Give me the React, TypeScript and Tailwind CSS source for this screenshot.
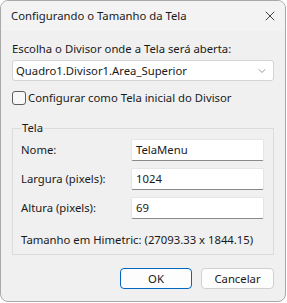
import { X, ChevronDown } from "lucide-react"

const FONT = { fontFamily: '"Segoe UI", "Noto Sans", "Open Sans", sans-serif' }

const FIELDS = [
  { label: "Nome:", value: "TelaMenu" },
  { label: "Largura (pixels):", value: "1024" },
  { label: "Altura (pixels):", value: "69" },
]

export default function App() {
  return (
    <div className="w-[287px] h-[303px] bg-white text-[11.3px] text-[#1a1a1a]" style={FONT}>
      <div className="w-[286px] h-[302px] bg-[#f0f0f0] border border-[#a9a9a9] rounded-[8px] flex flex-col overflow-hidden">
        {/* Title bar */}
        <div className="h-[30px] shrink-0 flex items-center justify-between pl-[10px] pr-[7px] bg-[#f3f3f3]">
          <span className="leading-[16px]">Configurando o Tamanho da Tela</span>
          <X size={16} strokeWidth={1.1} className="text-black" />
        </div>

        <div className="px-[11px] flex flex-col">
          <div className="mt-[10px] leading-[16px]">Escolha o Divisor onde a Tela será aberta:</div>

          <div className="mt-[3px] h-[21px] bg-white border border-[#d4d4d4] rounded-[3px] flex items-center justify-between pl-[3px] pr-[5px]">
            <span className="leading-[16px]">Quadro1.Divisor1.Area_Superior</span>
            <ChevronDown size={12} strokeWidth={1.2} className="text-[#555]" />
          </div>

          <label className="mt-[9px] flex items-center gap-[2px] h-[16px]">
            <span className="w-[14px] h-[14px] border border-[#5e5e5e] rounded-[3px] bg-[#f7f7f7]" />
            <span className="leading-[16px]">Configurar como Tela inicial do Divisor</span>
          </label>

          {/* Group box */}
          <fieldset className="mt-[14px] h-[135px] border border-[#dcdcdc] px-[8px] pt-[3px]">
            <legend className="px-[1px] leading-[16px]">Tela</legend>
            <div className="flex flex-col gap-[7px]">
              {FIELDS.map((f) => (
                <div key={f.label} className="flex items-center">
                  <span className="w-[110px] leading-[16px]">{f.label}</span>
                  <div className="w-[133px] h-[22px] bg-white border border-[#e5e5e5] border-b-[#8a8a8a] rounded-[2px] flex items-center pl-[4px]">
                    <span className="leading-[16px]">{f.value}</span>
                  </div>
                </div>
              ))}
            </div>
            <div className="mt-[13px] leading-[16px] whitespace-nowrap">Tamanho em Himetric: (27093.33 x 1844.15)</div>
          </fieldset>

          <div className="mt-[13px] flex justify-end gap-[9px]">
            <button className="w-[72px] h-[21px] bg-[#fdfdfd] border border-[#0067c0] rounded-[4px] leading-[16px]">
              OK
            </button>
            <button className="w-[73px] h-[21px] bg-[#fdfdfd] border border-[#d0d0d0] rounded-[4px] leading-[16px]">
              Cancelar
            </button>
          </div>
        </div>
      </div>
    </div>
  )
}
